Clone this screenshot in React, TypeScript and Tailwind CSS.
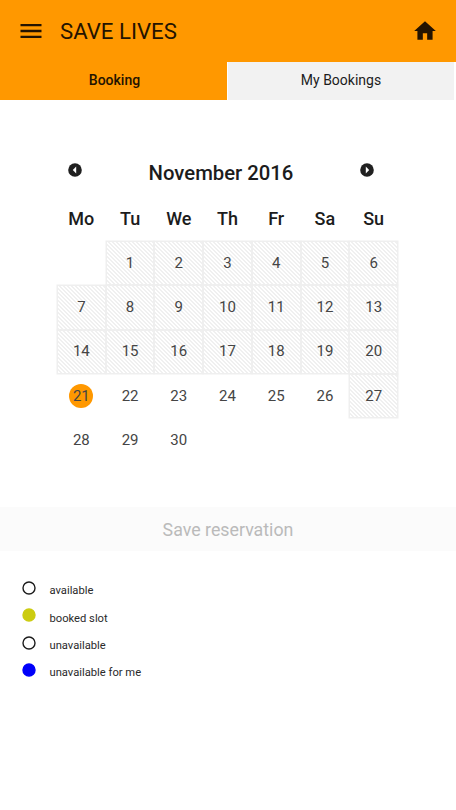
import clsx from "clsx";
import { MdHome, MdMenu } from "react-icons/md";

const weekDays = ["Mo", "Tu", "We", "Th", "Fr", "Sa", "Su"];

// November 2016 starts on a Tuesday
const cells: (number | null)[] = [
  null,
  ...Array.from({ length: 30 }, (_, i) => i + 1),
];

const today = 21;
const isBlocked = (day: number) => day < today || day === 27;

const legend = [
  { label: "available", dot: "fill-white stroke-[#1c1c1c]" },
  { label: "booked slot", dot: "fill-[#cccc10] stroke-[#cccc10]" },
  { label: "unavailable", dot: "fill-white stroke-[#1c1c1c]" },
  { label: "unavailable for me", dot: "fill-[#0000fa] stroke-[#0000fa]" },
];

function Header() {
  return (
    <header className="flex h-[62px] items-center bg-[#ff9800] pl-[17px] pr-[18px] text-[#241300]">
      <MdMenu className="h-7 w-7" />
      <h1 className="ml-[15px] flex-1 text-[22.2px] leading-none">
        SAVE LIVES
      </h1>
      <MdHome className="h-[26px] w-[26px]" />
    </header>
  );
}

function Tabs() {
  return (
    <nav className="flex h-[38px] pr-[2px] text-[14px] text-[#1c1c1c]">
      <button className="w-[227px] bg-[#ff9800] pb-px pl-[2px] font-medium text-[#241300]">
        Booking
      </button>
      <button className="ml-px flex-1 bg-[#f2f2f2] pb-px">My Bookings</button>
    </nav>
  );
}

function Arrow({ next }: { next?: boolean }) {
  return (
    <svg viewBox="0 0 14 14" className="h-[14px] w-[14px]">
      <circle cx="7" cy="7" r="6.8" fill="#202020" />
      <path d={next ? "M5.8 3.4L9.2 7 5.8 10.6z" : "M8.2 3.4L4.8 7l3.4 3.6z"} fill="#fff" />
    </svg>
  );
}

function Calendar() {
  return (
    <section className="ml-[57px] mt-[57px] w-[341px]">
      <div className="flex h-8 items-start justify-between pl-[11px] pr-6">
        <button className="pt-[6px]">
          <Arrow />
        </button>
        <h2 className="pt-[2px] text-[20.3px] font-medium leading-[28px] text-[#1c1c1c]">
          November 2016
        </h2>
        <button className="pt-[6px]">
          <Arrow next />
        </button>
      </div>
      <div className="grid h-[52px] grid-cols-7 items-center pt-[7px] text-center text-[18px] font-medium text-[#1c1c1c]">
        {weekDays.map((name) => (
          <span key={name}>{name}</span>
        ))}
      </div>
      <div className="grid auto-rows-[44.3px] grid-cols-7 text-[15px] text-[#454545]">
        {cells.map((day, i) => (
          <div
            key={i}
            className={clsx(
              "flex items-center justify-center",
              day &&
                isBlocked(day) &&
                "border border-[#efefef] bg-[linear-gradient(45deg,#f0f0f0_25%,#fff_25%,#fff_50%,#f0f0f0_50%,#f0f0f0_75%,#fff_75%)] bg-[length:4px_4px] shadow-[0_0_0_0.5px_#efefef]"
            )}
          >
            <span
              className={clsx(
                "flex h-6 w-6 items-center justify-center",
                day === today && "rounded-full bg-[#ff9800]"
              )}
            >
              {day}
            </span>
          </div>
        ))}
      </div>
    </section>
  );
}

export default function App() {
  return (
    <div className="min-h-screen bg-white font-[Roboto,sans-serif]">
      <Header />
      <Tabs />
      <Calendar />

      <button className="mt-[45px] block h-[44px] w-full bg-[#fbfbfb] pt-[2px] text-[17.8px] text-[#bababa]">
        Save reservation
      </button>

      {/* Legend */}
      <ul className="ml-[22px] mt-[28px] text-[11.2px] text-[#2a2a2a]">
        {legend.map(({ label, dot }) => (
          <li key={label} className="flex h-[27.3px] items-start">
            <svg viewBox="0 0 14 14" className="mt-[1.5px] h-[14px] w-[14px]">
              <circle cx="7" cy="7" r="6" strokeWidth="1.4" className={dot} />
            </svg>
            <span className="ml-[13.5px] mt-[4px] leading-4">{label}</span>
          </li>
        ))}
      </ul>
    </div>
  );
}
